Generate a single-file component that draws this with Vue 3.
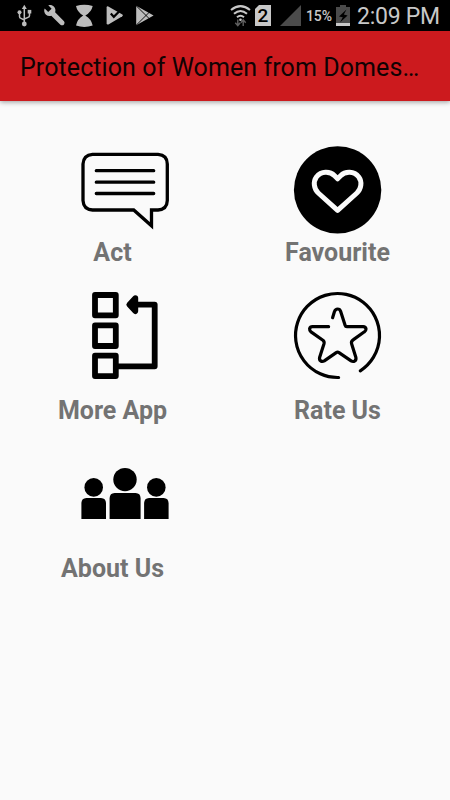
<template>
    <div class="page">
        <div class="status-bar">
            <svg class="status-left" width="170" height="31" viewBox="0 0 170 31" fill="#bdbdbd">
                <g fill="none" stroke="#bdbdbd" stroke-width="1.5">
                    <path d="M24.3 7V24M19.5 13V16.5Q19.5 18 21 18.4L24.3 20M29.5 12.5V15.5Q29.5 17 28 17.4L24.3 19" />
                </g>
                <path d="M24.3 4.8L26.8 9H21.8Z" />
                <circle cx="24.3" cy="24" r="2.4" />
                <circle cx="19.5" cy="12.3" r="2" />
                <rect x="27.7" y="9.9" width="3.6" height="3.6" />
                <path d="M48.3 5.3C51.5 4.4 55 6.4 55.4 9.8Q55.5 11 55.1 12.3L64 21.2Q65.2 22.6 64 24.4Q62.4 26 60.4 24.7L51.3 15.8C48 16.9 44.6 14.7 44.2 11.2Q44.1 9.7 44.7 8.6L48.2 12L51.6 8.8Z" />
                <path d="M76 6Q84.3 3.3 92.7 6Q91.4 12.2 85.3 15.5Q91.4 19 92.7 25.6Q84.3 28.5 76 25.6Q77.2 19 83.2 15.5Q77.2 12.2 76 6Z" />
                <path d="M106.6 7.6Q106.7 5.8 108.3 6.5L122.4 14.6Q123.6 15.4 122.3 16.3L108.4 24.4Q106.8 25 106.6 23.3Z" />
                <path d="M110.8 13.6L113.8 16.8L120.6 10" fill="none" stroke="#000" stroke-width="2.2" />
                <path d="M116.5 10.6L119 8.3" fill="none" stroke="#000" stroke-width="1.4" />
                <path d="M136.2 5.8L153.6 15.5L136.2 25.2Z" />
                <path d="M135.6 5.2L150 19.4M135.6 25.8L150 11.5" fill="none" stroke="#000" stroke-width=".9" />
            </svg>
            <svg class="wifi" width="22" height="24" viewBox="0 0 22 24" fill="none" stroke="#c8c8c8" stroke-width="2">
                <path d="M1 6Q10.5 -1.7 20 6M4 9.8Q10.5 4.2 17 9.8M7 13.2Q10.5 10.2 14 13.2" />
                <circle cx="10.5" cy="15.7" r="1.3" fill="#c8c8c8" stroke="none" />
                <path d="M7.8 15.5V21.5M5.3 18.8L7.8 21.6L10.2 18.8M13.2 22V16M10.8 18.7L13.2 15.9L15.7 18.7" stroke="#606060" stroke-width="1.4" />
            </svg>
            <div class="sim">2</div>
            <svg class="signal" width="21" height="21" viewBox="0 0 21 21">
                <path d="M21 0V21H0Z" fill="#4b4b4b" />
            </svg>
            <span class="percent">15%</span>
            <svg class="battery" width="14" height="21" viewBox="0 0 14 21">
                <path d="M4 0H10V2H14V21H0V2H4Z" fill="#4b4b4b" />
                <path d="M0 18H14V21H0Z" fill="#c8c8c8" />
                <path d="M10.5 4.5L3 11.4L6.8 12.2L4 17.4L11.6 10.4L7.8 9.5Z" fill="#000" />
            </svg>
            <span class="clock">2:09 PM</span>
        </div>
        <header class="toolbar">
            <h1>Protection of Women from Domes…</h1>
        </header>
        <main class="menu">
            <div class="item first shifted">
                <svg class="icon" viewBox="0 0 88 88" fill="none" stroke="#000" stroke-width="3.3" stroke-linecap="round">
                    <path d="M11.5 8.3H77Q86.3 9 86.3 18V54.5Q86 63.5 77 64H70.5V79.8L52.7 64H11.5Q2.5 63.5 2 54.5V18Q2.5 9 11.5 8.3Z" />
                    <path d="M15.3 24.7H72.7M15.3 36.2H72.7M15.3 47.5H72.7" />
                </svg>
                <div class="label">Act</div>
            </div>
            <div class="item first">
                <svg class="icon" viewBox="0 0 88 88">
                    <circle cx="43.6" cy="43.9" r="43.7" />
                    <path d="M43.6 64.3L24.3 47C19.9 43 18.9 35.8 22.4 31C27.1 25 35.9 25 40.6 29.8L43.6 32.8L46.6 29.8C51.3 25 60.1 25 64.8 31C68.3 35.8 67.3 43 62.9 47Z" fill="none" stroke="#fafafa" stroke-width="5" stroke-linejoin="round" />
                </svg>
                <div class="label">Favourite</div>
            </div>
            <div class="item shifted">
                <svg class="icon" viewBox="0 0 88 88" fill="none" stroke="#000" stroke-width="5.8" stroke-linejoin="round" stroke-linecap="round">
                    <rect x="14" y="4" width="20.8" height="20.3" />
                    <rect x="14" y="34.4" width="20.8" height="20.6" />
                    <rect x="14" y="64.7" width="20.8" height="20.4" />
                    <path d="M36 75.3H73.7V13.6H50" />
                    <path d="M54.3 7.1L48.3 13.6L54.3 20.1V13.6Z" />
                </svg>
                <div class="label">More App</div>
            </div>
            <div class="item">
                <svg class="icon" viewBox="0 0 88 88" fill="none" stroke="#000" stroke-width="3.2" stroke-linecap="round" stroke-linejoin="round">
                    <path d="M44.6 86.5A42 42 0 1 1 66.3 79.8" />
                    <path transform="translate(-.4 0)" d="M39 26.7L40.8 20.7Q41.8 18 44 18Q46.3 18 47 20.3L51.5 34.3Q51.9 35.7 53.3 35.7H69.5Q72 35.9 72.4 37.9Q72.4 39.8 70.8 40.8L59.5 48.9Q57.3 50.4 58 52.7L62.3 66.5Q62.8 69 60.8 70.2Q59.2 70.9 57.5 69.9L45.4 61.6Q44 60.7 42.6 61.6L30.7 69.9Q28.8 70.9 27.2 70Q25.5 68.8 26 66.5L30.4 52.7Q31 50.6 29.3 49.2L17.4 40.9Q15.8 39.7 16 37.7Q16.6 35.7 18.8 35.7H35" />
                </svg>
                <div class="label">Rate Us</div>
            </div>
            <div class="item shifted">
                <svg class="icon" viewBox="0 0 88 88">
                    <circle cx="12.7" cy="38.4" r="9.3" />
                    <path d="M.4 70V54Q.6 49.2 5.4 49H20Q24.8 49.2 25 54V70Z" />
                    <circle cx="44" cy="30.6" r="11.7" />
                    <path d="M28.6 70V49Q28.8 44.2 33.6 44H54.6Q59.4 44.2 59.6 49V70Z" />
                    <circle cx="75.3" cy="38.4" r="9.3" />
                    <path d="M63.1 70V54Q63.3 49.2 68 49H82.6Q87.4 49.2 87.6 54V70Z" />
                </svg>
                <div class="label">About Us</div>
            </div>
        </main>
    </div>
</template>
<script setup>
</script>
<style>
    body{
        background: #fafafa;
    }
</style>
<style scoped>
    .page{
        height: 800px;
        overflow: hidden;
        background: #fafafa;
        font-family: Roboto, sans-serif;
    }
    .page svg{
        display: block;
        flex: none;
        overflow: visible;
    }
    .status-bar{
        height: 31px;
        display: flex;
        align-items: center;
        background: #000;
        color: #c8c8c8;
        white-space: nowrap;
    }
    .wifi{
        margin-left: 60px;
    }
    .sim{
        width: 16px;
        height: 21px;
        margin-left: 3px;
        background: #c8c8c8;
        color: #000;
        font-size: 19px;
        font-weight: 500;
        line-height: 22px;
        text-align: center;
        clip-path: polygon(4px 0, 100% 0, 100% 100%, 0 100%, 0 4px);
    }
    .signal{
        margin-left: 9px;
    }
    .percent{
        width: 26px;
        margin-left: 5px;
        padding-top: 1px;
        font-size: 14px;
        font-weight: 500;
        letter-spacing: -0.1px;
    }
    .battery{
        margin-left: 4px;
    }
    .clock{
        margin-left: 7px;
        padding-top: 1px;
        font-size: 23px;
        letter-spacing: -0.25px;
    }
    .toolbar{
        height: 70px;
        padding-left: 20px;
        display: flex;
        align-items: center;
        background: #cc1a1e;
        box-shadow: 0 1px 5px rgba(0, 0, 0, 0.4);
    }
    .toolbar h1{
        margin: 0;
        padding-top: 4px;
        color: #110203;
        font-size: 25px;
        font-weight: normal;
        letter-spacing: 0.09px;
        line-height: 30px;
        white-space: nowrap;
    }
    .menu{
        padding-top: 45px;
        display: grid;
        grid-template-columns: 225px 225px;
    }
    .item{
        height: 158px;
        display: flex;
        flex-direction: column;
        align-items: center;
    }
    .item.first{
        height: 145px;
    }
    .icon{
        width: 88px;
        height: 88px;
    }
    .shifted .icon{
        margin-left: 25px;
    }
    .label{
        margin-top: 17px;
        color: #737373;
        font-size: 25px;
        font-weight: bold;
        line-height: 30px;
    }
    .first .label{
        margin-top: 4px;
    }
</style>
